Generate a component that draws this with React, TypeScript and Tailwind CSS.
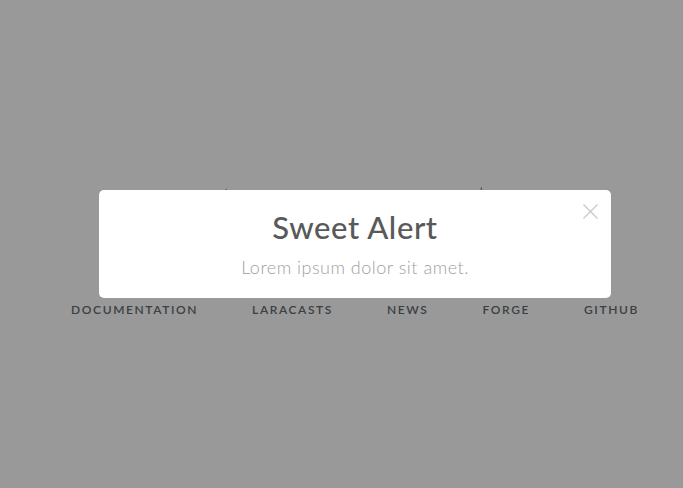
import React from 'react';

const links = ['Documentation', 'Laracasts', 'News', 'Forge', 'GitHub'];

const App = (() => {
    return (
        <div className="relative w-[710px] h-screen bg-white font-['Lato',sans-serif] overflow-hidden">
            {/* page behind the alert */}
            <div className="h-full flex items-center justify-center">
                <div className="flex flex-col items-center text-[#636b6f]">
                    <div className="text-[84px] font-thin leading-[88px] mb-[43px] tracking-[4px]">Laravel</div>
                    <div className="flex gap-[4px]">
                        {links.map((l) => (
                            <a key={l}
                               className="px-[25px] text-[12px] font-semibold tracking-[1.6px] uppercase leading-[14px]">
                                {l}
                            </a>
                        ))}
                    </div>
                </div>
            </div>

            {/* overlay */}
            <div className="absolute inset-0 bg-black/40 flex items-center justify-center">
                <div className="relative w-[512px] bg-white rounded-[5px] p-5 flex flex-col items-center">
                    <button className="absolute top-[8px] right-[8px] w-[26px] h-[26px] flex items-center justify-center">
                        <svg width="15" height="15" viewBox="0 0 15 15" className="text-[#c8c8c8]">
                            <path d="M0.5 0.5L14.5 14.5M14.5 0.5L0.5 14.5" stroke="currentColor" strokeWidth="1.3"/>
                        </svg>
                    </button>
                    <h2 className="text-[31px] leading-[35px] font-medium tracking-[0.6px] text-[#595959] mb-3">Sweet Alert</h2>
                    <div className="text-[18px] leading-[21px] font-light tracking-[0.5px] text-[#a0a0a0]">Lorem ipsum dolor sit amet.</div>
                </div>
            </div>
        </div>
    )
})

export default App
